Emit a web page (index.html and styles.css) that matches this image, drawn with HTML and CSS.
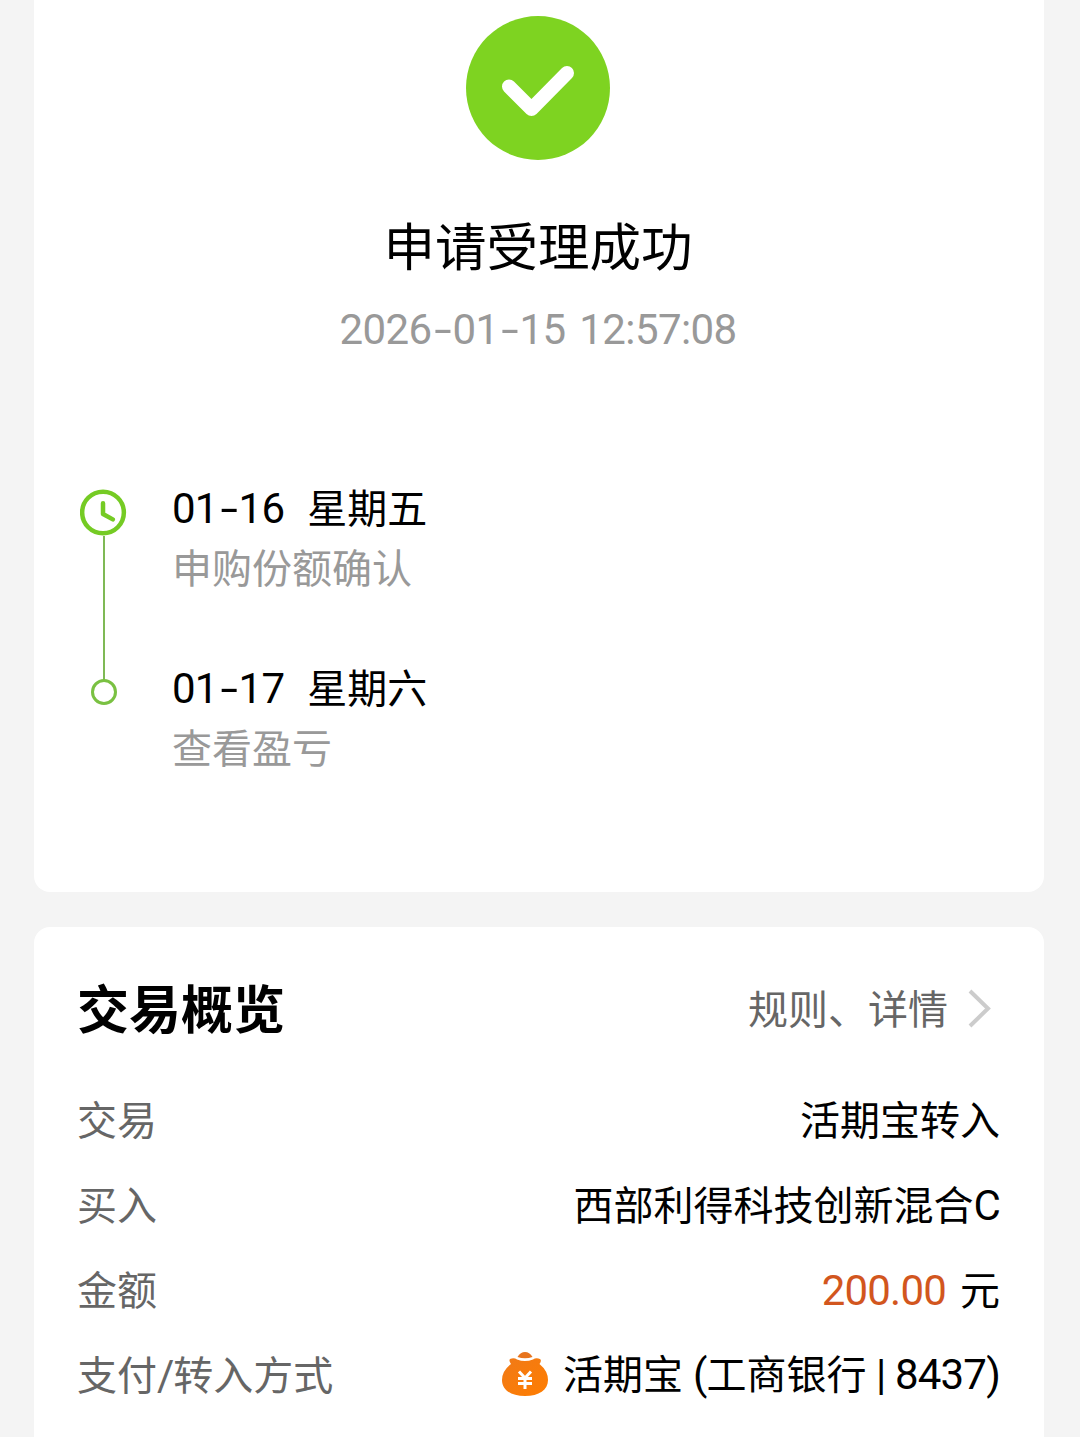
FILE: index.html
```html
<!DOCTYPE html>
<html lang="zh-CN">
<head>
    <meta charset="UTF-8">
    <title>申请受理成功</title>
    <link rel="stylesheet" href="styles.css">
</head>
<body>
    <div class="card result">
        <svg class="success-icon" viewBox="0 0 144 144">
            <circle cx="72" cy="72" r="72" fill="#7ed321"/>
            <path d="M43 70.500L65.500 93L101 57" fill="none" stroke="#fff" stroke-width="14" stroke-linecap="round" stroke-linejoin="round"/>
        </svg>
        <h1>申请受理成功</h1>
        <p class="time num">2026<span class="dash">-</span>01<span class="dash">-</span>15 12:57:08</p>

        <div class="timeline">
            <div class="step">
                <div class="marker">
                    <svg class="clock" viewBox="0 0 48 48" fill="none" stroke="#75cb24" stroke-linecap="round" stroke-linejoin="round">
                        <circle cx="23.500" cy="24" r="21.300" stroke-width="4.600"/>
                        <path d="M23.500 14.500V25.500L33.500 31" stroke-width="4.600"/>
                    </svg>
                    <div class="line"></div>
                </div>
                <div class="step-text">
                    <div class="step-date"><span class="num">01<span class="dash">-</span>16</span><span class="week">星期五</span></div>
                    <div class="step-desc">申购份额确认</div>
                </div>
            </div>
            <div class="step">
                <div class="marker">
                    <div class="dot"></div>
                </div>
                <div class="step-text">
                    <div class="step-date"><span class="num">01<span class="dash">-</span>17</span><span class="week">星期六</span></div>
                    <div class="step-desc">查看盈亏</div>
                </div>
            </div>
        </div>
    </div>

    <div class="card overview">
        <div class="overview-head">
            <h2>交易概览</h2>
            <div class="rules">
                <span>规则、详情</span>
                <svg class="arrow" viewBox="0 0 24 40">
                    <path d="M2 3L20 20.500L2 38" fill="none" stroke="#ccc" stroke-width="4"/>
                </svg>
            </div>
        </div>
        <div class="row">
            <span class="label">交易</span>
            <span class="value">活期宝转入</span>
        </div>
        <div class="row">
            <span class="label">买入</span>
            <span class="value">西部利得科技创新混合<span class="num">C</span></span>
        </div>
        <div class="row">
            <span class="label">金额</span>
            <span class="value"><span class="num amount">200.00</span>元</span>
        </div>
        <div class="row">
            <span class="label">支付<span class="num slash">/</span>转入方式</span>
            <span class="value pay">
                <svg class="bag" viewBox="0 0 48 46">
                    <defs>
                        <linearGradient id="bagFill" x1="0" y1="0" x2="1" y2="1">
                            <stop offset="0" stop-color="#f07a18"/>
                            <stop offset="1" stop-color="#ff7d00"/>
                        </linearGradient>
                    </defs>
                    <path d="M16.500 6C18.500 2.500 21 1 24 1S29.500 2.500 31.500 6Q24 8.500 16.500 6Z" fill="#e8741d"/>
                    <path d="M9 8Q13 6.500 16 8.500Q24 11.500 32 8.500Q35 6.500 39 8Q41 9.500 38.500 13Q47 20 47 29C47 39 38 45 24 45S1 39 1 29Q1 20 10 13Q7.500 9.500 9 8Z" fill="url(#bagFill)"/>
                    <path d="M18 20.500L24 27L30 20.500M24 27V38M17 27.500H31M17 32.500H31" fill="none" stroke="#fff" stroke-width="3"/>
                </svg>
                <span>活期宝<span class="num bank-open">(</span>工商银行<span class="num bar">|</span><span class="num">8437)</span></span>
            </span>
        </div>
    </div>
</body>
</html>
```

FILE: styles.css
```css
* {
    margin: 0;
    padding: 0;
    box-sizing: border-box;
}

body {
    background: #f4f4f4;
    padding: 0 36px 0 34px;
    height: 1437px;
    overflow: hidden;
    font-family: 'Noto Sans CJK SC', sans-serif;
    font-size: 40px;
    color: #000;
}

.card {
    background: #fff;
    border-radius: 16px;
}

.num {
    font-family: Roboto, 'Noto Sans CJK SC', sans-serif;
    font-size: 42px;
    letter-spacing: -0.8px;
}

.dash {
    display: inline-block;
    width: 21px;
    text-align: center;
    transform: scaleX(1.5);
}

.result {
    height: 892px;
    padding: 16px 47px 0 45px;
    border-radius: 0 0 16px 16px;
}

.success-icon {
    display: block;
    width: 144px;
    height: 144px;
    margin: 0 auto;
}

h1 {
    margin-top: 44px;
    font-size: 51.5px;
    font-weight: 400;
    line-height: 80px;
    text-align: center;
}

.time {
    margin-top: 16px;
    line-height: 60px;
    text-align: center;
    color: #999;
    letter-spacing: -0.6px;
    word-spacing: 4px;
}

.timeline {
    margin-top: 116px;
}

.step {
    display: flex;
    gap: 45px;
    height: 180px;
}

.marker {
    display: flex;
    flex-direction: column;
    align-items: center;
    width: 49px;
    padding-top: 13px;
}

.clock {
    flex: none;
    width: 47px;
    height: 47px;
}

.line {
    flex: none;
    width: 2px;
    height: 145px;
    margin-left: 1px;
    background: #7fb955;
}

.dot {
    width: 26px;
    height: 26px;
    margin-top: 10px;
    border: 3px solid #7ac142;
    border-radius: 50%;
}

.step-date,
.step-desc {
    line-height: 60px;
    height: 60px;
    white-space: nowrap;
}

.step-date .num {
    margin-left: -1px;
}

.step-desc {
    margin-left: -1px;
    color: #999;
}

.week {
    margin-left: 23px;
}

.overview {
    height: 560px;
    margin-top: 35px;
    padding: 45px 44px 0 43px;
}

.overview-head {
    display: flex;
    justify-content: space-between;
    align-items: center;
    height: 70px;
    margin-bottom: 34px;
}

h2 {
    font-size: 52px;
    font-weight: 700;
    line-height: 70px;
}

.rules {
    display: flex;
    align-items: center;
    gap: 20px;
    padding-right: 8px;
    line-height: 60px;
    color: #666;
}

.arrow {
    width: 24px;
    height: 40px;
    margin-top: 2px;
}

.row {
    display: flex;
    justify-content: space-between;
    height: 85px;
    line-height: 85px;
    white-space: nowrap;
}

.label {
    color: #666;
}

.label .num {
    letter-spacing: -1px;
}

.amount {
    margin-right: 14px;
    color: #d2561e;
}

.pay {
    display: flex;
    align-items: center;
    gap: 14px;
}

.bag {
    width: 48px;
    height: 46px;
}

.bank-open {
    margin-left: 10px;
}

.bar {
    margin: 0 9.5px;
}
```
